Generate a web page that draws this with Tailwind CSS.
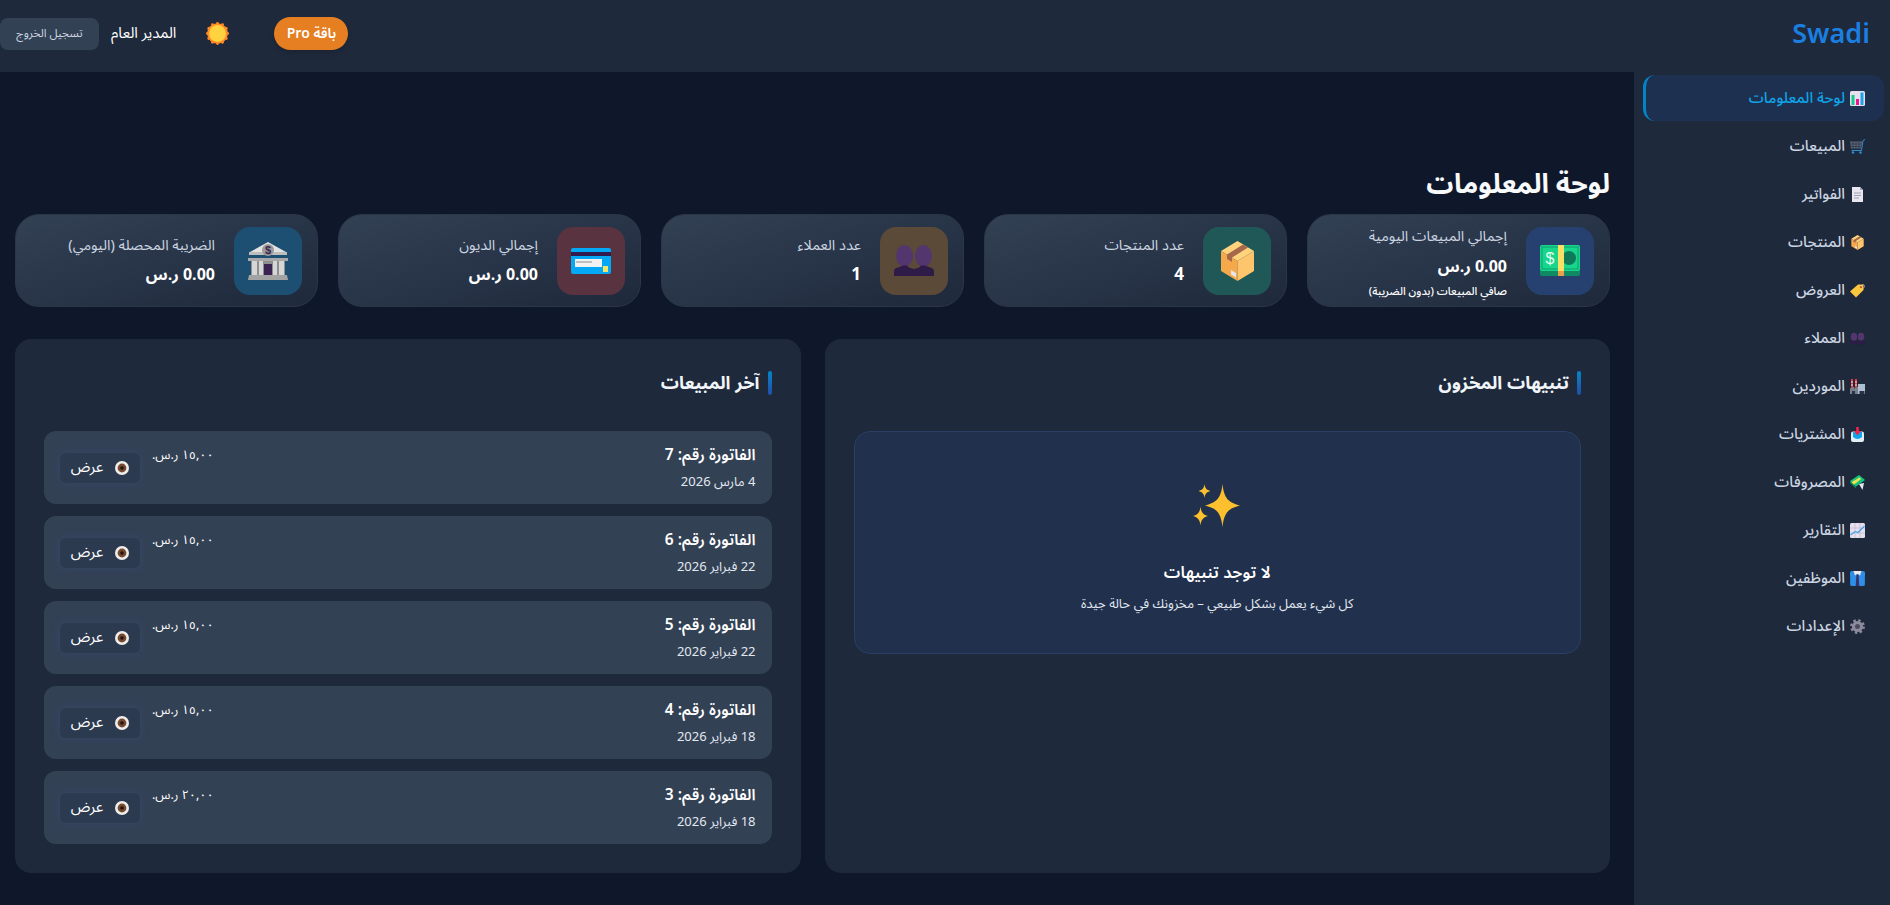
<!DOCTYPE html>
<html lang="ar" dir="rtl">
<head>
    <meta charset="UTF-8">
    <title>Swadi</title>
    <script src="https://cdn.jsdelivr.net/npm/@tailwindcss/browser@4"></script>
</head>
<body class="bg-[#0f172a] text-white h-[905px] overflow-hidden flex flex-col font-['Noto_Sans_Arabic','Noto_Sans',sans-serif]">

<!-- icon sprites -->
<svg class="absolute w-0 h-0" aria-hidden="true">
    <symbol id="i-box" viewBox="0 0 33 40">
        <polygon points="16.5,0 33,10 16.5,20 0,10" fill="#ffd27d"/>
        <polygon points="0,10 16.5,20 16.5,40 0,30" fill="#f5a94a"/>
        <polygon points="33,10 16.5,20 16.5,40 33,30" fill="#ffc56c"/>
        <polygon points="6,13.6 22,3.6 27,6.6 11,16.6 11,21 6,18" fill="#a5694a"/>
        <polygon points="10,29 15,32 15,36.5 10,33.5" fill="#e5e7eb"/>
    </symbol>
    <symbol id="i-people" viewBox="0 0 40 31">
        <ellipse cx="10.5" cy="11" rx="8.5" ry="11" fill="#54366e"/>
        <ellipse cx="29.5" cy="11" rx="8.5" ry="11" fill="#54366e"/>
        <path d="M0 31V26Q0 23 5 22L9 20.5H13L15 22.500L20 24L25 22.500L27 20.500H31L35 22Q40 23 40 26V31Z" fill="#2f1b48"/>
    </symbol>
    <symbol id="i-eye" viewBox="0 0 14 14">
        <circle cx="7" cy="7" r="7" fill="#f1edea"/>
        <circle cx="7" cy="7" r="4.400" fill="#74492f"/>
        <circle cx="7" cy="7" r="1.800" fill="#1f1512"/>
    </symbol>
</svg>

<header class="h-[72px] shrink-0 bg-[#1e293b] flex items-center justify-between pr-5 pl-0">
    <div class="text-[27px] font-semibold text-[#1a7fe0] mb-0.5" dir="ltr">Swadi</div>
    <div class="flex items-center mb-[5px]">
        <button class="w-[74px] h-[33px] rounded-full bg-[#e67e22] text-white text-sm font-semibold shadow-md ml-[45px]">باقة Pro</button>
        <svg class="w-[23px] h-[23px] ml-[30px]" viewBox="0 0 24 24">
            <g fill="#ff8a25">
                <circle cx="12" cy="12" r="10.800"/>
                <circle cx="12" cy="1.500" r="1.500"/><circle cx="12" cy="22.500" r="1.500"/><circle cx="1.500" cy="12" r="1.500"/><circle cx="22.500" cy="12" r="1.500"/>
                <circle cx="17.250" cy="2.900" r="1.500"/><circle cx="6.750" cy="2.900" r="1.500"/><circle cx="17.250" cy="21.100" r="1.500"/><circle cx="6.750" cy="21.100" r="1.500"/>
                <circle cx="21.100" cy="6.750" r="1.500"/><circle cx="2.900" cy="6.750" r="1.500"/><circle cx="21.100" cy="17.250" r="1.500"/><circle cx="2.900" cy="17.250" r="1.500"/>
            </g>
            <circle cx="12" cy="12" r="8.800" fill="#ffd23f"/>
        </svg>
        <span class="text-[15px] text-white ml-3">المدير العام</span>
        <button class="w-[99px] h-8 rounded-lg bg-[#334155] text-[11.500px] text-[#cbd5e1]">تسجيل الخروج</button>
    </div>
</header>

<div class="flex flex-1 min-h-0">
    <aside class="w-64 shrink-0 bg-[#1e293b] pt-[3px] pr-1.5 pl-[9px] flex flex-col gap-0.5 text-[15px] font-medium text-[#cbd5e1]">
        <a class="h-[46px] flex items-center gap-[5px] pr-[19px] rounded-xl bg-[#1e3050] text-[#0ea5e9] border-l-[3px] border-[#0284c7]">
            <svg class="w-[15px] h-[15px] shrink-0" viewBox="0 0 15 15"><rect width="15" height="15" rx="1.500" fill="#e6e0ee"/><rect x="1.500" y="4" width="3" height="10" fill="#10c98a"/><rect x="6" y="8" width="3" height="6" fill="#f0148c"/><rect x="10.500" y="1.500" width="3" height="12.500" fill="#1aa3e8"/></svg>
            لوحة المعلومات</a>
        <a class="h-[46px] flex items-center gap-[5px] pr-[19px]">
            <svg class="w-[15px] h-[15px] shrink-0" viewBox="0 0 15 15"><path d="M0 2.500H12L11 9.500H1Z" fill="#5b6678"/><path d="M0 5H12M0 7.500H11.500M3 2.500V9.500M6 2.500V9.500M9 2.500V9.500" stroke="#2b3445" stroke-width=".7"/><path d="M15 .5 13 1.500 11.500 11.500H1.500" stroke="#2d8fd0" fill="none" stroke-width="1"/><circle cx="3" cy="13.500" r="1.200" fill="#2d8fd0"/><circle cx="10.500" cy="13.500" r="1.200" fill="#2d8fd0"/></svg>
            المبيعات</a>
        <a class="h-[46px] flex items-center gap-[5px] pr-[19px]">
            <svg class="w-[15px] h-[15px] shrink-0" viewBox="0 0 15 15"><path d="M2 0H10L13 3V15H2Z" fill="#e9e6f0"/><path d="M10 0 13 3H10Z" fill="#a9a7b8"/><path d="M4 6H11M4 8.500H11M4 11H9" stroke="#9a99ab" stroke-width=".9"/></svg>
            الفواتير</a>
        <a class="h-[46px] flex items-center gap-[5px] pr-[19px]"><svg class="w-[15px] h-[15px] shrink-0"><use href="#i-box"/></svg>المنتجات</a>
        <a class="h-[46px] flex items-center gap-[5px] pr-[19px]">
            <svg class="w-[15px] h-[15px] shrink-0" viewBox="0 0 15 15"><path d="M0 8.500 8 1.500H13.500V7L6 14.500Z" fill="#fcc63d"/><circle cx="11" cy="4" r="1.100" fill="#c0392b"/><path d="M11 4C12 1 15 1 14.500 3.500 14.300 5 13 5.500 12 5.500" fill="none" stroke="#c9ccd6" stroke-width=".6"/></svg>
            العروض</a>
        <a class="h-[46px] flex items-center gap-[5px] pr-[19px]"><svg class="w-[15px] h-[15px] shrink-0"><use href="#i-people"/></svg>العملاء</a>
        <a class="h-[46px] flex items-center gap-[5px] pr-[19px]">
            <svg class="w-[15px] h-[15px] shrink-0" viewBox="0 0 15 15"><rect x="1" y="0" width="2" height="9" fill="#e53945"/><rect x="5" y="0" width="2" height="9" fill="#e53945"/><path d="M1 3H3M5 3H7M1 6H3M5 6H7" stroke="#f5e9e9" stroke-width="1"/><path d="M0 15V9.500L4 7.500V9.500L8 7.500V15Z" fill="#7a7f8c"/><rect x="8" y="5" width="7" height="10" fill="#aebfd2"/><rect x="9.500" y="12" width="5" height="3" fill="#2a3345"/><rect x="2" y="12" width="3" height="3" fill="#2a3345"/></svg>
            الموردين</a>
        <a class="h-[46px] flex items-center gap-[5px] pr-[19px]">
            <svg class="w-[15px] h-[15px] shrink-0" viewBox="0 0 15 15"><rect x="1" y="4.500" width="13" height="10.500" rx="2" fill="#e3edf4"/><path d="M3 5H12V10Q7.500 14 3 10Z" fill="#0ea5e9"/><path d="M6.200 0H8.800V4H11L7.500 8.500 4 4H6.200Z" fill="#f0244f"/></svg>
            المشتريات</a>
        <a class="h-[46px] flex items-center gap-[5px] pr-[19px]">
            <svg class="w-[15px] h-[15px] shrink-0" viewBox="0 0 15 15"><path d="M9 9 14 8 12.500 15Z" fill="#e5e7eb"/><path d="M0 6 9 0 15 5 6 11.500Z" fill="#14c77d"/><path d="M1 7.500 9.500 2.500 11 4 3.500 10Z" fill="#f5e050"/><path d="M0 6V8L6 13.500 6 11.500Z" fill="#0b8a5c"/></svg>
            المصروفات</a>
        <a class="h-[46px] flex items-center gap-[5px] pr-[19px]">
            <svg class="w-[15px] h-[15px] shrink-0" viewBox="0 0 15 15"><rect width="15" height="15" rx="1.500" fill="#e6dfee"/><path d="M0 5H15M0 10H15M5 0V15M10 0V15" stroke="#b9b3c9" stroke-width=".6"/><path d="M.5 12 5 8.500 8 9.500 14.500 3" fill="none" stroke="#3aa0e8" stroke-width="1.100"/></svg>
            التقارير</a>
        <a class="h-[46px] flex items-center gap-[5px] pr-[19px]">
            <svg class="w-[15px] h-[15px] shrink-0" viewBox="0 0 15 15"><rect width="15" height="15" rx="2" fill="#2f8fe8"/><path d="M3.500 0H11.500L10 4.500 7.500 3 5 4.500Z" fill="#ecebea"/><path d="M6.500 3.500H8.500L9.300 15H5.700Z" fill="#3a3164"/><path d="M0 5V15M15 5V15" stroke="#1a6fc0" stroke-width=".8"/></svg>
            الموظفين</a>
        <a class="h-[46px] flex items-center gap-[5px] pr-[19px]">
            <svg class="w-[15px] h-[15px] shrink-0" viewBox="0 0 15 15"><circle cx="7.500" cy="7.500" r="5.500" fill="#8d8a9c"/><circle cx="7.500" cy="7.500" r="6.200" fill="none" stroke="#8d8a9c" stroke-width="2.400" stroke-dasharray="2.430 2.430"/><circle cx="7.500" cy="7.500" r="2.500" fill="#4b4a63"/></svg>
            الإعدادات</a>
    </aside>

    <main class="flex-1 min-w-0 pr-6 pl-[15px] pt-[90px]">
        <h1 class="text-[27px] font-bold leading-[46px] mb-1.5 text-[#f8fafc]">لوحة المعلومات</h1>

        <div class="grid grid-cols-5 gap-5 h-[93px]">
            <div class="flex gap-[19px] items-center pr-[15px] rounded-3xl border border-[#2b3648] bg-linear-to-br from-[#334155] to-[#1e293b]">
                <div class="w-[68px] h-[68px] shrink-0 rounded-2xl bg-[#26406f] flex items-center justify-center">
                    <svg class="w-10 h-[31px]" viewBox="0 0 40 31"><rect y="3" width="40" height="28" rx="2" fill="#0f8a63"/><rect width="40" height="26" rx="2" fill="#17d68c"/><rect x="2" y="2" width="36" height="22" fill="none" stroke="#0f9e6c" stroke-width="1"/><text x="10" y="19" font-size="16" text-anchor="middle" fill="#e8fff4" font-family="Liberation Sans">$</text><circle cx="29" cy="13" r="7" fill="#0f7a5a"/><rect x="18" width="6" height="26" fill="#f8e067"/><rect x="18" y="26" width="6" height="5" fill="#e8a04a"/></svg>
                </div>
                <div class="pt-0.5">
                    <div class="text-[14.500px] text-[#cbd5e1] leading-6">إجمالي المبيعات اليومية</div>
                    <div class="text-base font-bold leading-9">0.00 ر.س</div>
                    <div class="text-[11px] font-medium leading-[14px]">صافي المبيعات (بدون الضريبة)</div>
                </div>
            </div>
            <div class="flex gap-[19px] items-center pr-[15px] rounded-3xl border border-[#2b3648] bg-linear-to-br from-[#334155] to-[#1e293b]">
                <div class="w-[68px] h-[68px] shrink-0 rounded-2xl bg-[#1f5857] flex items-center justify-center"><svg class="w-[33px] h-10"><use href="#i-box"/></svg></div>
                <div class="pt-1">
                    <div class="text-[14.500px] text-[#cbd5e1] leading-6">عدد المنتجات</div>
                    <div class="text-[17px] font-bold leading-[34px]">4</div>
                </div>
            </div>
            <div class="flex gap-[19px] items-center pr-[15px] rounded-3xl border border-[#2b3648] bg-linear-to-br from-[#334155] to-[#1e293b]">
                <div class="w-[68px] h-[68px] shrink-0 rounded-2xl bg-[#5b4a38] flex items-center justify-center"><svg class="w-10 h-[31px]"><use href="#i-people"/></svg></div>
                <div class="pt-1">
                    <div class="text-[14.500px] text-[#cbd5e1] leading-6">عدد العملاء</div>
                    <div class="text-[17px] font-bold leading-[34px]">1</div>
                </div>
            </div>
            <div class="flex gap-[19px] items-center pr-[15px] rounded-3xl border border-[#2b3648] bg-linear-to-br from-[#334155] to-[#1e293b]">
                <div class="w-[68px] h-[68px] shrink-0 rounded-2xl bg-[#5a3340] flex items-center justify-center">
                    <svg class="w-10 h-[26px]" viewBox="0 0 40 26"><rect width="40" height="26" rx="2" fill="#03a9f4"/><rect y="4" width="40" height="4" fill="#311b4f"/><rect x="4" y="11" width="27" height="8" fill="#f2f2f2"/><path d="M5 14H21" stroke="#9e9e9e" stroke-width="1.200"/><rect x="32" y="18" width="5" height="6" fill="#f5e663"/></svg>
                </div>
                <div class="pt-1">
                    <div class="text-[14.500px] text-[#cbd5e1] leading-6">إجمالي الديون</div>
                    <div class="text-base font-bold leading-[34px]">0.00 ر.س</div>
                </div>
            </div>
            <div class="flex gap-[19px] items-center pr-[15px] rounded-3xl border border-[#2b3648] bg-linear-to-br from-[#334155] to-[#1e293b]">
                <div class="w-[68px] h-[68px] shrink-0 rounded-2xl bg-[#1d4f72] flex items-center justify-center">
                    <svg class="w-10 h-[38px]" viewBox="0 0 40 38"><polygon points="20,0 38,10 2,10" fill="#e2e2e2"/><rect x="1" y="10" width="38" height="3" fill="#bdbdbd"/><rect x="0" y="16" width="40" height="3" fill="#a8a8a8"/><rect x="3" y="19" width="34" height="14" fill="#8f8f8f"/><rect x="4" y="19" width="5" height="14" fill="#d6d6d6"/><rect x="31" y="19" width="5" height="14" fill="#d6d6d6"/><rect x="11" y="19" width="4" height="14" fill="#d6d6d6"/><rect x="25" y="19" width="4" height="14" fill="#d6d6d6"/><rect x="16" y="22" width="8" height="11" fill="#3a2350"/><polygon points="1,33 39,33 40,38 0,38" fill="#a3a3a3"/><circle cx="20" cy="8" r="6" fill="#9b9b9b"/><text x="20" y="12" font-size="11" font-weight="700" text-anchor="middle" fill="#3a2350" font-family="Liberation Sans">$</text></svg>
                </div>
                <div class="pt-1">
                    <div class="text-[14.500px] text-[#cbd5e1] leading-6">الضريبة المحصلة (اليومي)</div>
                    <div class="text-base font-bold leading-[34px]">0.00 ر.س</div>
                </div>
            </div>
        </div>

        <div class="grid grid-cols-2 gap-6 mt-8 h-[534px]">
            <section class="bg-[#1e293b] rounded-2xl py-7 px-[29px]">
                <h2 class="h-8 flex items-center gap-2 text-[18px] font-bold text-[#f1f5f9] before:w-1 before:h-6 before:rounded before:bg-linear-to-b before:from-[#0284c7] before:to-[#1e4fa8]">تنبيهات المخزون</h2>
                <div class="mt-8 h-[223px] rounded-2xl border border-[#2a3f66] bg-[#20304d] flex flex-col items-center">
                    <svg class="w-12 h-[43px] mt-[52px]" viewBox="0 0 48 43" fill="#fcc02e">
                        <path d="M29.500 0C31 14 35 18.500 47 21.500 35 24.500 31 29 29.500 43 28 29 24 24.500 12 21.500 24 18.500 28 14 29.500 0Z"/>
                        <path d="M11.500 0C12 4 13.500 6 17.500 7 13.500 8 12 10 11.500 14 11 10 9.500 8 5.500 7 9.500 6 11 4 11.500 0Z"/>
                        <path d="M7.500 22.500C8 27.500 10 31 15 32 10 33 8 36.500 7.500 41.500 7 36.500 5 33 0 32 5 31 7 27.500 7.500 22.500Z"/>
                    </svg>
                    <div class="text-[16.500px] font-semibold mt-8 leading-7">لا توجد تنبيهات</div>
                    <div class="text-[13px] text-[#e2e8f0] mt-[5px] leading-6">كل شيء يعمل بشكل طبيعي – مخزونك في حالة جيدة</div>
                </div>
            </section>

            <section class="bg-[#1e293b] rounded-2xl py-7 px-[29px]">
                <h2 class="h-8 flex items-center gap-2 text-[18px] font-bold text-[#f1f5f9] before:w-1 before:h-6 before:rounded before:bg-linear-to-b before:from-[#0284c7] before:to-[#1e4fa8]">آخر المبيعات</h2>
                <div class="mt-8 flex flex-col gap-3">
                    <div class="h-[73px] px-4 rounded-xl bg-[#334155] flex items-center justify-between">
                        <div>
                            <div class="text-[15.500px] font-semibold leading-6 mb-[3px] mt-px">الفاتورة رقم: 7</div>
                            <div class="text-[13px] text-[#e2e8f0] leading-6">4 مارس 2026</div>
                        </div>
                        <div class="flex gap-3 self-stretch">
                            <div class="text-[12.500px] mt-3.5 leading-5">١٥,٠٠ ر.س.</div>
                            <button class="self-center w-20 h-[30px] rounded-md bg-[#2c3a50] text-[15px] flex items-center justify-center gap-3 shadow-[0_0_8px_#3b5a8a55]"><svg class="w-3.5 h-3.5"><use href="#i-eye"/></svg>عرض</button>
                        </div>
                    </div>
                    <div class="h-[73px] px-4 rounded-xl bg-[#334155] flex items-center justify-between">
                        <div>
                            <div class="text-[15.500px] font-semibold leading-6 mb-[3px] mt-px">الفاتورة رقم: 6</div>
                            <div class="text-[13px] text-[#e2e8f0] leading-6">22 فبراير 2026</div>
                        </div>
                        <div class="flex gap-3 self-stretch">
                            <div class="text-[12.500px] mt-3.5 leading-5">١٥,٠٠ ر.س.</div>
                            <button class="self-center w-20 h-[30px] rounded-md bg-[#2c3a50] text-[15px] flex items-center justify-center gap-3 shadow-[0_0_8px_#3b5a8a55]"><svg class="w-3.5 h-3.5"><use href="#i-eye"/></svg>عرض</button>
                        </div>
                    </div>
                    <div class="h-[73px] px-4 rounded-xl bg-[#334155] flex items-center justify-between">
                        <div>
                            <div class="text-[15.500px] font-semibold leading-6 mb-[3px] mt-px">الفاتورة رقم: 5</div>
                            <div class="text-[13px] text-[#e2e8f0] leading-6">22 فبراير 2026</div>
                        </div>
                        <div class="flex gap-3 self-stretch">
                            <div class="text-[12.500px] mt-3.5 leading-5">١٥,٠٠ ر.س.</div>
                            <button class="self-center w-20 h-[30px] rounded-md bg-[#2c3a50] text-[15px] flex items-center justify-center gap-3 shadow-[0_0_8px_#3b5a8a55]"><svg class="w-3.5 h-3.5"><use href="#i-eye"/></svg>عرض</button>
                        </div>
                    </div>
                    <div class="h-[73px] px-4 rounded-xl bg-[#334155] flex items-center justify-between">
                        <div>
                            <div class="text-[15.500px] font-semibold leading-6 mb-[3px] mt-px">الفاتورة رقم: 4</div>
                            <div class="text-[13px] text-[#e2e8f0] leading-6">18 فبراير 2026</div>
                        </div>
                        <div class="flex gap-3 self-stretch">
                            <div class="text-[12.500px] mt-3.5 leading-5">١٥,٠٠ ر.س.</div>
                            <button class="self-center w-20 h-[30px] rounded-md bg-[#2c3a50] text-[15px] flex items-center justify-center gap-3 shadow-[0_0_8px_#3b5a8a55]"><svg class="w-3.5 h-3.5"><use href="#i-eye"/></svg>عرض</button>
                        </div>
                    </div>
                    <div class="h-[73px] px-4 rounded-xl bg-[#334155] flex items-center justify-between">
                        <div>
                            <div class="text-[15.500px] font-semibold leading-6 mb-[3px] mt-px">الفاتورة رقم: 3</div>
                            <div class="text-[13px] text-[#e2e8f0] leading-6">18 فبراير 2026</div>
                        </div>
                        <div class="flex gap-3 self-stretch">
                            <div class="text-[12.500px] mt-3.5 leading-5">٢٠,٠٠ ر.س.</div>
                            <button class="self-center w-20 h-[30px] rounded-md bg-[#2c3a50] text-[15px] flex items-center justify-center gap-3 shadow-[0_0_8px_#3b5a8a55]"><svg class="w-3.5 h-3.5"><use href="#i-eye"/></svg>عرض</button>
                        </div>
                    </div>
                </div>
            </section>
        </div>
    </main>
</div>

</body>
</html>
